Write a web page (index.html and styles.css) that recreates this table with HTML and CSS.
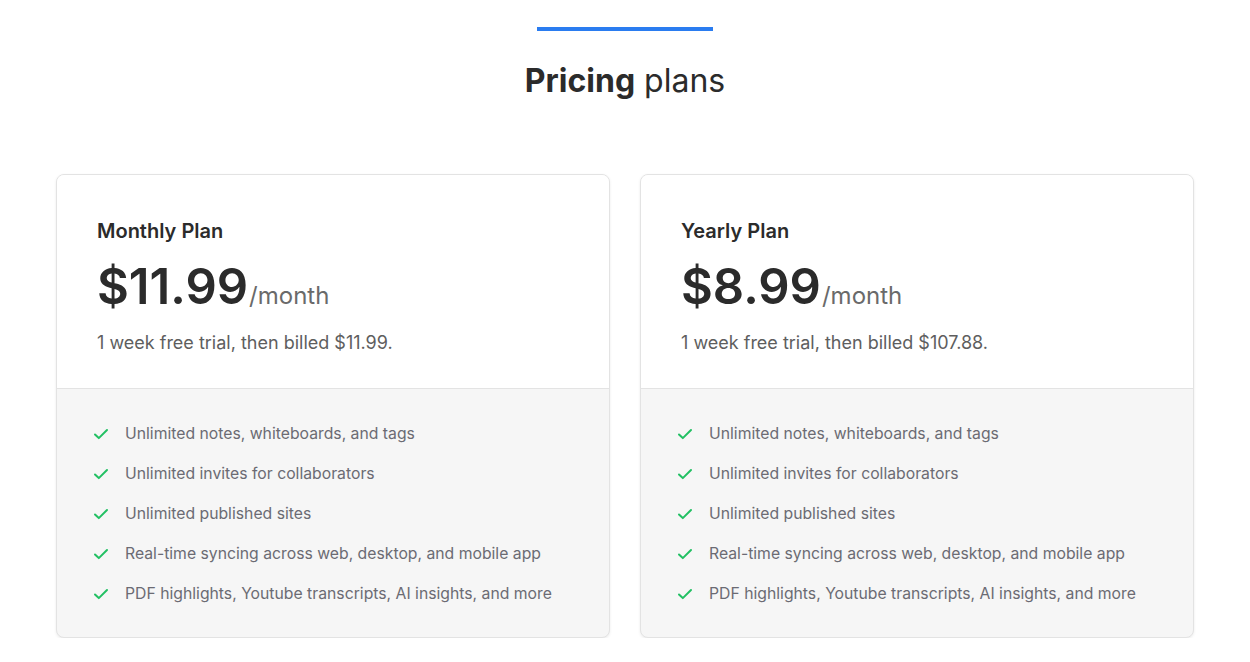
FILE: index.html
```html
<!DOCTYPE html>
<html lang="en">
<head>
<meta charset="utf-8">
<title>Pricing plans</title>
<link rel="stylesheet" href="styles.css">
</head>
<body>
<section class="pricing">
  <div class="accent"></div>
  <h1 class="title"><strong>Pricing</strong> plans</h1>
  <div class="plans">
    <div class="card">
      <div class="card-top">
        <h2 class="plan-name">Monthly Plan</h2>
        <div class="price"><span class="amount">$11.99</span><span class="period">/month</span></div>
        <p class="note">1 week free trial, then billed $11.99.</p>
      </div>
      <ul class="features">
        <li><svg class="check" viewBox="0 0 16 16"><path d="M2 8.5l3.8 3.6L14 4"/></svg>Unlimited notes, whiteboards, and tags</li>
        <li><svg class="check" viewBox="0 0 16 16"><path d="M2 8.5l3.8 3.6L14 4"/></svg>Unlimited invites for collaborators</li>
        <li><svg class="check" viewBox="0 0 16 16"><path d="M2 8.5l3.8 3.6L14 4"/></svg>Unlimited published sites</li>
        <li><svg class="check" viewBox="0 0 16 16"><path d="M2 8.5l3.8 3.6L14 4"/></svg>Real-time syncing across web, desktop, and mobile app</li>
        <li><svg class="check" viewBox="0 0 16 16"><path d="M2 8.5l3.8 3.6L14 4"/></svg>PDF highlights, Youtube transcripts, AI insights, and more</li>
      </ul>
    </div>
    <div class="card">
      <div class="card-top">
        <h2 class="plan-name">Yearly Plan</h2>
        <div class="price"><span class="amount">$8.99</span><span class="period">/month</span></div>
        <p class="note">1 week free trial, then billed $107.88.</p>
      </div>
      <ul class="features">
        <li><svg class="check" viewBox="0 0 16 16"><path d="M2 8.5l3.8 3.6L14 4"/></svg>Unlimited notes, whiteboards, and tags</li>
        <li><svg class="check" viewBox="0 0 16 16"><path d="M2 8.5l3.8 3.6L14 4"/></svg>Unlimited invites for collaborators</li>
        <li><svg class="check" viewBox="0 0 16 16"><path d="M2 8.5l3.8 3.6L14 4"/></svg>Unlimited published sites</li>
        <li><svg class="check" viewBox="0 0 16 16"><path d="M2 8.5l3.8 3.6L14 4"/></svg>Real-time syncing across web, desktop, and mobile app</li>
        <li><svg class="check" viewBox="0 0 16 16"><path d="M2 8.5l3.8 3.6L14 4"/></svg>PDF highlights, Youtube transcripts, AI insights, and more</li>
      </ul>
    </div>
  </div>
</section>
</body>
</html>
```

FILE: styles.css
```css
* { box-sizing: border-box; }
html, body { margin: 0; padding: 0; background: #fff; }
body {
  font-family: Inter, "Noto Sans", "Liberation Sans", sans-serif;
  color: #2b2b2b;
}
.pricing {
  display: flex;
  flex-direction: column;
  align-items: center;
  padding-top: 27px;
}
.accent {
  width: 176px;
  height: 4px;
  background: #2a7cf0;
}
.title {
  margin: 30px 0 0;
  font-size: 32px;
  line-height: 40px;
  font-weight: 400;
  color: #2b2b2b;
}
.title strong { font-weight: 700; }
.plans {
  margin-top: 73px;
  width: 1138px;
  display: grid;
  grid-template-columns: 1fr 1fr;
  gap: 30px;
}
.card {
  border: 1px solid #e3e3e3;
  border-radius: 8px;
  overflow: hidden;
  background: #f6f6f6;
  box-shadow: 0 1px 3px rgba(0,0,0,0.08);
}
.card-top {
  background: #fff;
  padding: 43px 40px 33px;
  border-bottom: 1px solid #e3e3e3;
}
.plan-name {
  margin: 0;
  font-size: 20px;
  line-height: 26px;
  font-weight: 600;
  color: #2b2b2b;
}
.price {
  margin-top: 13px;
  display: flex;
  align-items: baseline;
  height: 60px;
}
.amount {
  font-size: 49px;
  line-height: 60px;
  font-weight: 600;
  color: #2b2b2b;
}
.period {
  font-size: 24px;
  color: #6a6a6a;
  margin-left: 1px;
}
.note {
  margin: 14px 0 0;
  font-size: 18px;
  line-height: 24px;
  color: #5e5e5e;
}
.features {
  list-style: none;
  margin: 0;
  padding: 33px 36px 31px;
  display: flex;
  flex-direction: column;
  gap: 16px;
}
.features li {
  display: flex;
  align-items: center;
  gap: 16px;
  font-size: 15.75px;
  line-height: 24px;
  color: #6b6b73;
}
.check {
  width: 16px;
  height: 16px;
  flex: none;
  fill: none;
  stroke: #22c063;
  stroke-width: 2;
  stroke-linecap: round;
  stroke-linejoin: round;
}
```
